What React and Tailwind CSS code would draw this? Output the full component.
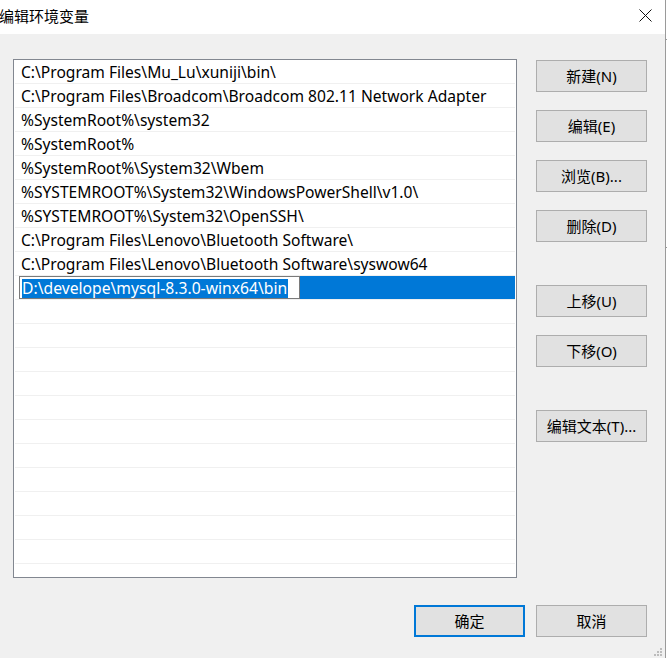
import React from 'react'

// Windows "编辑环境变量" dialog

const paths = [
  'C:\\Program Files\\Mu_Lu\\xuniji\\bin\\',
  'C:\\Program Files\\Broadcom\\Broadcom 802.11 Network Adapter',
  '%SystemRoot%\\system32',
  '%SystemRoot%',
  '%SystemRoot%\\System32\\Wbem',
  '%SYSTEMROOT%\\System32\\WindowsPowerShell\\v1.0\\',
  '%SYSTEMROOT%\\System32\\OpenSSH\\',
  'C:\\Program Files\\Lenovo\\Bluetooth Software\\',
  'C:\\Program Files\\Lenovo\\Bluetooth Software\\syswow64',
]

const Btn = ({ children, className = '', primary }) => (
  <button
    className={
      'w-[111px] h-[32px] bg-[#e1e1e1] text-[15px] text-black flex items-center justify-center ' +
      (primary ? 'border-2 border-[#0078d7] ' : 'border border-[#adadad] ') +
      className
    }
  >
    {children}
  </button>
)

const Row = ({ text }) => (
  <div className='h-[24px] border-b border-[#f0f0f0] flex items-center pl-[6px] pt-[2px] text-[15.6px] text-black whitespace-nowrap'>
    {text}
  </div>
)

export default function App() {
  return (
    <div className='w-[667px] h-[658px] flex bg-white overflow-hidden font-["Noto_Sans","Noto_Sans_CJK_SC",sans-serif]'>
      <div className='w-[665px] flex flex-col'>
        {/* title bar */}
        <div className='h-[34px] bg-white flex items-center justify-between shrink-0'>
          <span className='text-[15px] text-black ml-[-1px] mt-[-2px]'>编辑环境变量</span>
          <svg width='13' height='13' viewBox='0 0 13 13' className='mr-[13px] mt-[-4px]'>
            <path d='M0.5 0.5L12.5 12.5M12.5 0.5L0.5 12.5' stroke='#111' strokeWidth='1' />
          </svg>
        </div>

        {/* body */}
        <div className='flex-1 bg-[#f0f0f0] flex flex-col pt-[25px] relative'>
          <div className='flex pl-[13px]'>
            {/* list */}
            <div className='w-[504px] h-[519px] border border-[#828790] bg-white overflow-hidden'>
              <div className='mx-[1px]'>
                {paths.map((p) => (
                  <Row key={p} text={p} />
                ))}
                <div className='h-[24px] border-b border-[#f0f0f0] flex items-stretch'>
                  <div className='w-[4px] bg-white' />
                  <div className='w-[281px] border border-[#7a7a7a] bg-white flex items-center pl-[2px] pt-[1px] text-[15.7px]'>
                    <span className='bg-[#0078d7] text-white leading-[19px] pr-[1px] whitespace-nowrap'>
                      D:\develope\mysql-8.3.0-winx64\bin
                    </span>
                  </div>
                  <div className='flex-1 bg-[#0078d7]' />
                </div>
                {Array.from({ length: 12 }).map((_, i) => (
                  <Row key={i} text='' />
                ))}
              </div>
            </div>

            {/* side buttons */}
            <div className='ml-[19px] pt-[1px] flex flex-col'>
              <Btn>新建(N)</Btn>
              <Btn className='mt-[18px]'>编辑(E)</Btn>
              <Btn className='mt-[18px]'>浏览(B)...</Btn>
              <Btn className='mt-[18px]'>删除(D)</Btn>
              <Btn className='mt-[43px]'>上移(U)</Btn>
              <Btn className='mt-[18px]'>下移(O)</Btn>
              <Btn className='mt-[43px]'>编辑文本(T)...</Btn>
            </div>
          </div>

          {/* bottom buttons */}
          <div className='flex justify-end gap-[11px] pr-[18px] mt-[27px]'>
            <Btn primary>确定</Btn>
            <Btn>取消</Btn>
          </div>

          {/* resize grip */}
          <svg width='12' height='12' viewBox='0 0 12 12' className='absolute right-[3px] bottom-0'>
            <rect x='10' y='2' width='2' height='2' fill='#bcbcbc' />
            <rect x='7' y='5' width='2' height='2' fill='#bcbcbc' />
            <rect x='10' y='5' width='2' height='2' fill='#bcbcbc' />
            <rect x='4' y='8' width='2' height='2' fill='#bcbcbc' />
            <rect x='7' y='8' width='2' height='2' fill='#bcbcbc' />
            <rect x='10' y='8' width='2' height='2' fill='#bcbcbc' />
          </svg>
        </div>
      </div>

      {/* edge of window behind */}
      <div className='w-[1px] bg-[#9a9a9a]' />
      <div className='w-[1px] bg-white flex flex-col'>
        <div className='h-[39px]' />
        <div className='h-[1px] bg-[#9a9a9a]' />
        <div className='h-[207px]' />
        <div className='h-[1px] bg-[#9a9a9a]' />
      </div>
    </div>
  )
}
